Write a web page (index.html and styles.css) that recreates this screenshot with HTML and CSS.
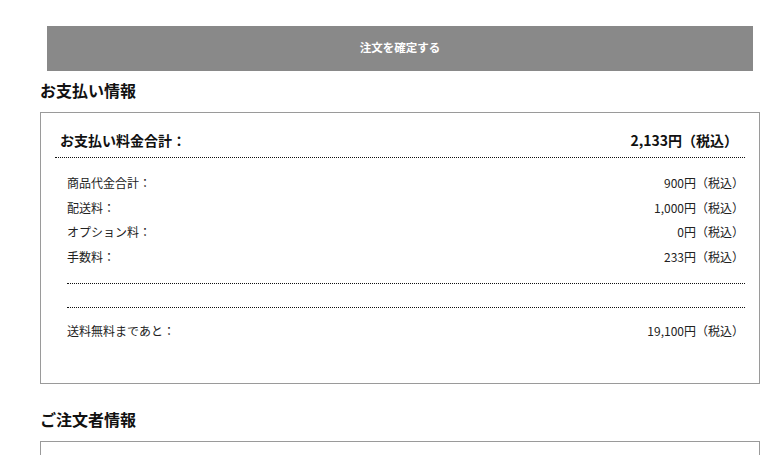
FILE: index.html
```html
<!DOCTYPE html>
<html lang="ja">
<head>
<meta charset="utf-8">
<title>お支払い情報</title>
<link rel="stylesheet" href="styles.css">
</head>
<body>
<div class="page">
  <button class="confirm" type="button">注文を確定する</button>

  <h2 class="section-title">お支払い情報</h2>
  <div class="panel">
    <div class="total">
      <span class="total-label">お支払い料金合計：</span>
      <span class="total-value">2,133円（税込）</span>
    </div>
    <div class="details">
      <div class="row"><span>商品代金合計：</span><span>900円（税込）</span></div>
      <div class="row"><span>配送料：</span><span>1,000円（税込）</span></div>
      <div class="row"><span>オプション料：</span><span>0円（税込）</span></div>
      <div class="row"><span>手数料：</span><span>233円（税込）</span></div>
      <div class="divider"></div>
      <div class="row row-free"><span>送料無料まであと：</span><span>19,100円（税込）</span></div>
    </div>
  </div>

  <h2 class="section-title section-title-next">ご注文者情報</h2>
  <div class="panel panel-next"></div>
</div>
</body>
</html>
```

FILE: styles.css
```css
html, body {
  margin: 0;
  padding: 0;
  background: #ffffff;
}

body {
  font-family: "Noto Sans CJK JP", "Noto Sans", sans-serif;
  color: #222222;
}

.page {
  width: 720px;
  margin-left: 40px;
  padding-top: 26px;
}

.confirm {
  display: flex;
  align-items: center;
  justify-content: center;
  width: 706px;
  height: 45px;
  margin: 0 7px;
  padding: 0 0 4px;
  border: none;
  background: #898989;
  color: #ffffff;
  font-family: inherit;
  font-size: 11.5px;
  font-weight: bold;
}

.section-title {
  margin: 9px 0 12px;
  font-size: 16px;
  line-height: 20px;
  font-weight: bold;
  color: #111111;
}

.section-title-next {
  margin-top: 25px;
}

.panel {
  border: 1px solid #9a9a9a;
  padding: 0 14px 40px;
}

.panel-next {
  height: 40px;
}

.total {
  display: flex;
  justify-content: space-between;
  padding: 17px 7px 7px 5px;
  font-size: 14px;
  line-height: 20px;
  font-weight: bold;
  color: #111111;
  border-bottom: 1px dotted #111111;
}

.details {
  margin-left: 12px;
  padding-top: 13px;
  font-size: 12px;
}

.row {
  display: flex;
  justify-content: space-between;
  padding-right: 1px;
  line-height: 24.5px;
}

.divider {
  margin-top: 14px;
  height: 23px;
  border-top: 1px dotted #111111;
  border-bottom: 1px dotted #111111;
}

.row-free {
  padding-top: 11px;
  line-height: 24px;
}
```
